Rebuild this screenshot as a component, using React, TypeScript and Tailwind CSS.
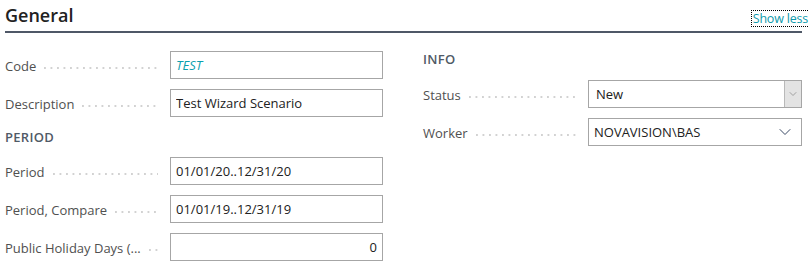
import { ChevronDown } from "lucide-react";

const font = { fontFamily: '"Open Sans", "Noto Sans", sans-serif' };

type FieldProps = {
	label: string;
	children: React.ReactNode;
};

// Label with dotted leader, then the control box.
function Field({ label, children }: FieldProps) {
	return (
		<div className="flex h-[28px] items-center">
			<div className="flex w-[165px] shrink-0 items-center pr-[12px] pt-[3px]">
				<span className="whitespace-nowrap text-[13px] text-[#505050]">{label}</span>
				<span className="ml-[8px] mt-[3px] h-[2px] flex-1 bg-[linear-gradient(to_right,#d2d2d2_2px,transparent_2px)] bg-[length:6.5px_2px] bg-repeat-x" />
			</div>
			{children}
		</div>
	);
}

function TextBox({ value, className = "" }: { value: string; className?: string }) {
	return (
		<div
			className={`flex h-[28px] flex-1 items-center border border-[#a6a6a6] bg-white px-[5px] pt-[2px] text-[13px] text-[#212121] ${className}`}
		>
			<span className="flex-1 truncate">{value}</span>
		</div>
	);
}

function Heading({ text }: { text: string }) {
	return (
		<div className="flex h-[20px] items-center pt-[1px] text-[13px] font-semibold tracking-[0.3px] text-[#505a66]">
			{text}
		</div>
	);
}

export default function App() {
	return (
		<div className="h-[273px] w-[809px] overflow-hidden bg-white pl-[5px] pr-[7px]" style={font}>
			<div className="flex h-[33px] items-start border-b-2 border-[#4f5867]">
				<h2 className="mt-[2px] text-[18px] font-semibold text-[#212121]">General</h2>
				<button className="ml-auto -mr-[8px] mt-[10px] h-[17px] border border-dotted border-black px-[1px] text-[12.5px] leading-[15px] tracking-[-0.2px] text-[#0e9aab]">
					Show less
				</button>
			</div>

			<div className="grid grid-cols-[378px_379px] gap-x-[40px]">
				<div className="mt-[18px] flex flex-col gap-[10px]">
					<Field label="Code">
						<TextBox value="TEST" className="italic !text-[#0c9fae]" />
					</Field>
					<Field label="Description">
						<TextBox value="Test Wizard Scenario" />
					</Field>
					<Heading text="PERIOD" />
					<Field label="Period">
						<TextBox value="01/01/20..12/31/20" />
					</Field>
					<Field label="Period, Compare">
						<TextBox value="01/01/19..12/31/19" />
					</Field>
					<Field label="Public Holiday Days (...">
						<TextBox value="0" className="text-right" />
					</Field>
				</div>

				<div className="mt-[16px] flex flex-col gap-[10px]">
					<div className="h-[21px]">
						<Heading text="INFO" />
					</div>
					<Field label="Status">
						<div className="flex h-[28px] flex-1 items-stretch border border-[#a6a6a6] bg-white text-[13px] text-[#212121]">
							<span className="flex flex-1 items-center pl-[7px] pt-[2px]">New</span>
							<span className="flex w-[17px] items-center justify-center border-l border-[#b9b9b9] bg-[#e3e3e3]">
								<ChevronDown size={12} strokeWidth={1.5} className="text-[#8a8a8a]" />
							</span>
						</div>
					</Field>
					<Field label="Worker">
						<div className="flex h-[28px] flex-1 items-center border border-[#a6a6a6] bg-white pl-[5px] pr-[6px] text-[13px] text-[#212121]">
							<span className="flex-1 pt-[2px]">NOVAVISION\BAS</span>
							<ChevronDown size={20} strokeWidth={1.2} className="text-[#3b4a66]" />
						</div>
					</Field>
				</div>
			</div>
		</div>
	);
}
